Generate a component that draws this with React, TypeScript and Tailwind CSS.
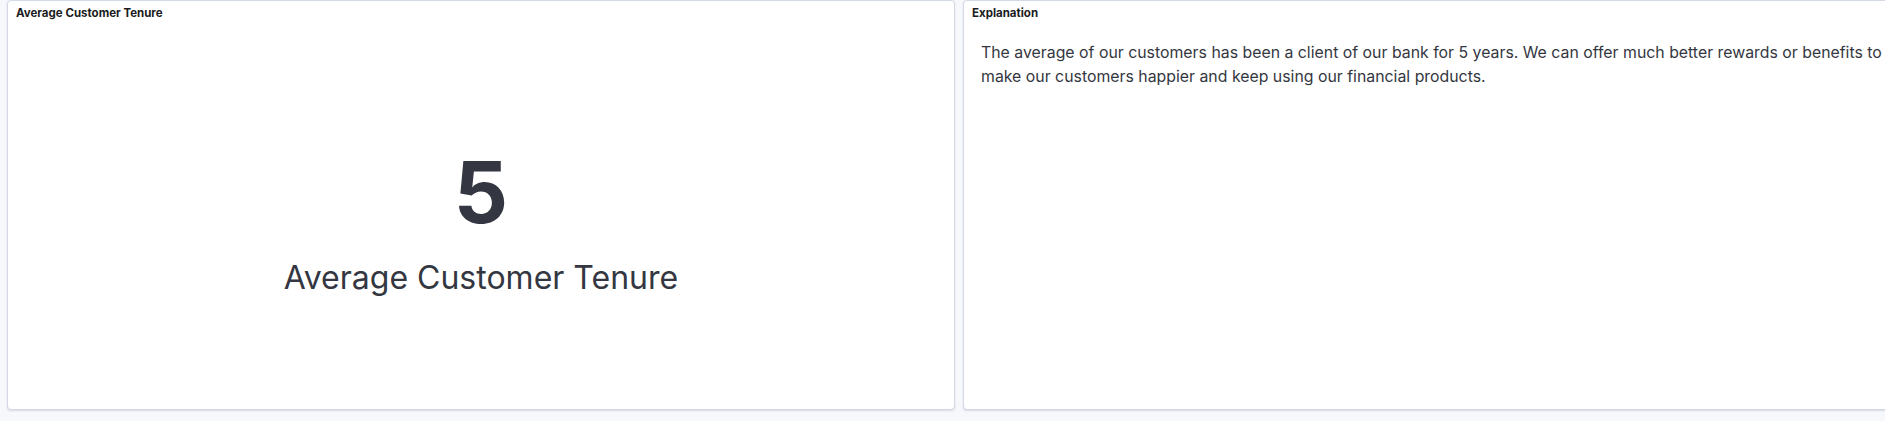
import React from "react";

const Panel = ({ title, children }: { title: string; children: React.ReactNode }) => (
  <div className="w-[948px] h-[410px] shrink-0 flex flex-col bg-white border border-[#d3dae6] rounded-[4px] shadow-[0_1px_2px_rgba(152,162,179,0.35)]">
    <div className="px-2 pt-[4px] text-[11.5px] leading-[16px] font-bold text-[#1a1c21]">{title}</div>
    {children}
  </div>
);

export default function App() {
  return (
    <div
      className="w-screen h-[421px] overflow-hidden bg-[#f7f8fc]"
      style={{ fontFamily: "Inter, 'Noto Sans', sans-serif" }}
    >
      <div className="flex gap-2 pl-[7px] w-[1930px]">
        <Panel title="Average Customer Tenure">
          <div className="flex-1 flex flex-col items-center justify-center pt-[16px] text-[#343741]">
            <div className="text-[85px] leading-none font-bold">5</div>
            <div className="mt-[24px] text-[32px] leading-[38px]">Average Customer Tenure</div>
          </div>
        </Panel>
        <Panel title="Explanation">
          <p className="pl-[17px] pr-4 pt-[20px] text-[15.85px] leading-[24px] text-[#343741]">
            The average of our customers has been a client of our bank for 5 years. We can offer much better rewards or benefits to make our customers happier and keep using our financial products.
          </p>
        </Panel>
      </div>
    </div>
  );
}
